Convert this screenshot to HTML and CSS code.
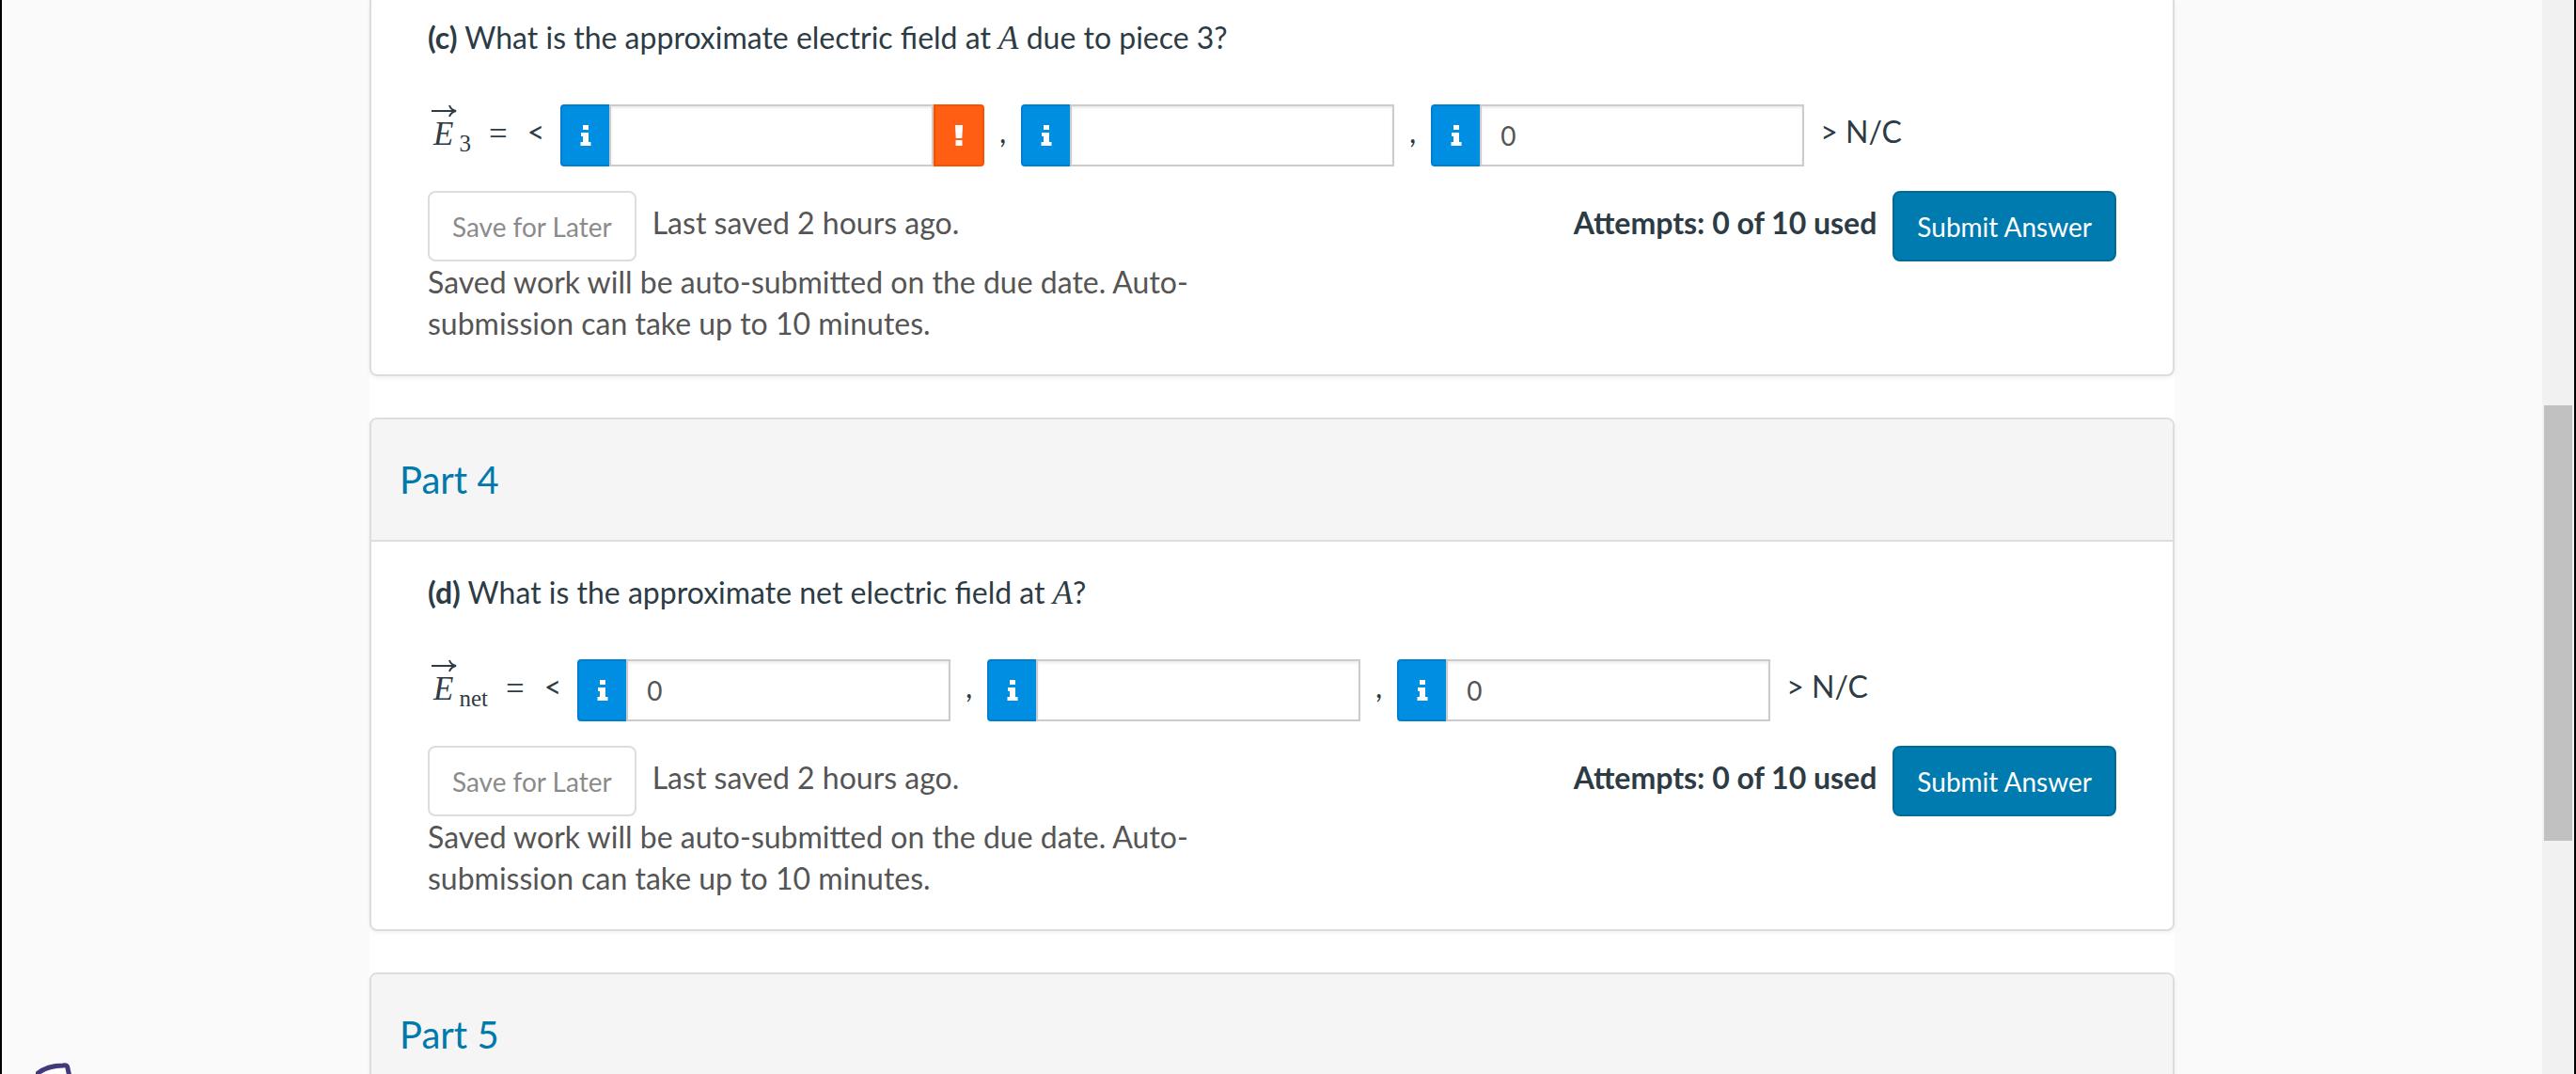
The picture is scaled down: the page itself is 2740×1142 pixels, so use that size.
FILE: index.html
```html
<!DOCTYPE html>
<html lang="en">
<head>
<meta charset="utf-8">
<title>Electric field assignment</title>
<link rel="stylesheet" href="styles.css">
</head>
<body>
<svg class="symbols" aria-hidden="true">
  <symbol id="icon-info" viewBox="0 0 12 22"><path d="M3 0h6v5H3zM1 8h8v10h2.500v4H.500v-4H3v-6H1z"/></symbol>
  <symbol id="icon-alert" viewBox="0 0 12 22"><path d="M2 0h8l-.700 14H2.700zM2.500 16h7v6h-7z"/></symbol>
  <symbol id="icon-arrow" viewBox="0 0 28 14"><path d="M0 7h26M19 1c1 3 3 5 7 6-4 1-6 3-7 6" fill="none" stroke="currentColor" stroke-width="2"/></symbol>
</svg>
<div class="viewport">
  <main class="assignment">
    <section class="card card-continued">
      <div class="card-body">
        <p class="question"><strong>(c)</strong> What is the approximate electric field at <i class="var">A</i> due to piece 3?</p>
        <div class="answer">
          <span class="vector"><svg class="arrow"><use href="#icon-arrow"/></svg><i class="var">E</i><sub>3</sub></span>
          <span class="equals">=</span>
          <span class="open">&lt;</span>
          <span class="field"><button type="button" class="addon info" aria-label="Hint"><svg><use href="#icon-info"/></svg></button><input type="text" aria-label="x component"><button type="button" class="addon alert" aria-label="Warning"><svg><use href="#icon-alert"/></svg></button></span>
          <span class="comma">,</span>
          <span class="field"><button type="button" class="addon info" aria-label="Hint"><svg><use href="#icon-info"/></svg></button><input type="text" aria-label="y component"></span>
          <span class="comma">,</span>
          <span class="field"><button type="button" class="addon info" aria-label="Hint"><svg><use href="#icon-info"/></svg></button><input type="text" aria-label="z component" value="0"></span>
          <span class="unit">&gt; N/C</span>
        </div>
        <div class="actions">
          <div class="saving">
            <div class="save-row"><button type="button" class="btn save">Save for Later</button><span>Last saved 2 hours ago.</span></div>
            <p class="note">Saved work will be auto-submitted on the due date. Auto-submission can take up to 10 minutes.</p>
          </div>
          <div class="submitting"><strong>Attempts: 0 of 10 used</strong><button type="button" class="btn submit">Submit Answer</button></div>
        </div>
      </div>
    </section>
    <section class="card">
      <h2 class="card-header">Part 4</h2>
      <div class="card-body">
        <p class="question"><strong>(d)</strong> What is the approximate net electric field at <i class="var">A</i>?</p>
        <div class="answer">
          <span class="vector"><svg class="arrow"><use href="#icon-arrow"/></svg><i class="var">E</i><sub>net</sub></span>
          <span class="equals">=</span>
          <span class="open">&lt;</span>
          <span class="field"><button type="button" class="addon info" aria-label="Hint"><svg><use href="#icon-info"/></svg></button><input type="text" aria-label="x component" value="0"></span>
          <span class="comma">,</span>
          <span class="field"><button type="button" class="addon info" aria-label="Hint"><svg><use href="#icon-info"/></svg></button><input type="text" aria-label="y component"></span>
          <span class="comma">,</span>
          <span class="field"><button type="button" class="addon info" aria-label="Hint"><svg><use href="#icon-info"/></svg></button><input type="text" aria-label="z component" value="0"></span>
          <span class="unit">&gt; N/C</span>
        </div>
        <div class="actions">
          <div class="saving">
            <div class="save-row"><button type="button" class="btn save">Save for Later</button><span>Last saved 2 hours ago.</span></div>
            <p class="note">Saved work will be auto-submitted on the due date. Auto-submission can take up to 10 minutes.</p>
          </div>
          <div class="submitting"><strong>Attempts: 0 of 10 used</strong><button type="button" class="btn submit">Submit Answer</button></div>
        </div>
      </div>
    </section>
    <section class="card">
      <h2 class="card-header">Part 5</h2>
    </section>
  </main>
  <div class="scrollbar"><div class="thumb"></div></div>
</div>
<svg class="badge" viewBox="0 0 60 12" aria-hidden="true"><path d="M-1 14C8 5 19 3 29 3q5-1 5 3l2 9" fill="#fff" stroke="#403a7c" stroke-width="5"/></svg>
</body>
</html>
```
FILE: styles.css
```css
* { box-sizing: border-box; }
body {
  margin: 0;
  background: #fafafa;
  color: #2d3b45;
  font: 32px/44px Lato, sans-serif;
}
.symbols { display: none; }
.viewport {
  display: flex;
  height: 100vh;
  overflow: hidden;
  border: solid #000;
  border-width: 0 2px;
}
.assignment {
  width: 100%;
  max-width: 1920px;
  height: max-content;
  margin: 0 auto;
  background: #fff;
}
.card {
  margin-bottom: 44px;
  border: 2px solid #ddd;
  border-radius: 8px;
  background: #fff;
  box-shadow: 0 2px 4px rgba(0, 0, 0, .06);
}
.card-continued {
  border-top: 0;
  border-radius: 0 0 8px 8px;
}
.card-header {
  margin: 0;
  padding: 42px 30px;
  border-bottom: 2px solid #ddd;
  border-radius: 6px 6px 0 0;
  background: #f5f5f5;
  color: #0079ad;
  font-size: 40px;
  font-weight: 400;
}
.card-body { padding: 32px 60px; }
.card-continued .card-body { padding-top: 18px; }
.question { margin: 0 0 49px; }
.var {
  font-family: "Liberation Serif", serif;
  font-size: 35px;
  line-height: 1;
}
.answer {
  display: flex;
  align-items: flex-start;
  padding-bottom: 26px;
  line-height: 58px;
}
.vector, .equals {
  height: 64px;
  font-family: "Liberation Serif", serif;
  line-height: 64px;
}
.vector {
  position: relative;
  padding-left: 6px;
}
.vector sub {
  margin-left: 6px;
  font-size: 25px;
  line-height: 1;
}
.arrow {
  position: absolute;
  left: 4px;
  top: 0;
  width: 28px;
  height: 14px;
}
.equals {
  margin: 0 21px 0 19px;
  font-size: 35px;
}
.open { margin-right: 17px; }
.comma { width: 39px; text-align: center; }
.unit { margin-left: 17px; }
.field { display: inline-flex; }
.field input {
  width: 345px;
  height: 66px;
  padding: 0 20px;
  border: 2px solid #ccc;
  border-radius: 0;
  background: #fff;
  box-shadow: inset 0 2px 3px rgba(0, 0, 0, .08);
  color: #555;
  font: 28px/40px Lato, sans-serif;
}
.addon {
  display: flex;
  align-items: center;
  justify-content: center;
  width: 52px;
  height: 66px;
  padding: 0;
  border: 2px solid;
  color: #fff;
}
.addon svg {
  width: 12px;
  height: 22px;
  fill: currentColor;
}
.info {
  border-color: #007fd0;
  border-right: 0;
  border-radius: 4px 0 0 4px;
  background: #008ee2;
}
.alert {
  width: 54px;
  border-color: #fc5000;
  border-radius: 0 4px 4px 0;
  background: #ff5e13;
}
.actions {
  display: flex;
  justify-content: space-between;
  align-items: flex-start;
}
.saving {
  flex: 0 1 820px;
  color: #555;
}
.save-row, .submitting {
  display: flex;
  align-items: flex-start;
  gap: 17px;
  line-height: 68px;
}
.note { margin: 0; }
.btn {
  height: 75px;
  padding: 0 24px;
  border: 2px solid;
  border-radius: 8px;
  font: 28px/40px Lato, sans-serif;
}
.save {
  border-color: #ddd;
  background: #fff;
  color: #8b8b8b;
}
.submit {
  border-color: #006a98;
  background: #007baf;
  color: #fff;
}
.scrollbar {
  display: flex;
  flex-direction: column;
  flex: none;
  width: 34px;
  padding: 0 2px;
  background: #f1f1f1;
}
.scrollbar::before { content: ""; flex: 431; }
.scrollbar::after { content: ""; flex: 248; }
.thumb { flex: 463; background: #c1c1c1; }
.badge {
  position: fixed;
  left: 38px;
  bottom: 0;
  width: 60px;
  height: 12px;
}
```
